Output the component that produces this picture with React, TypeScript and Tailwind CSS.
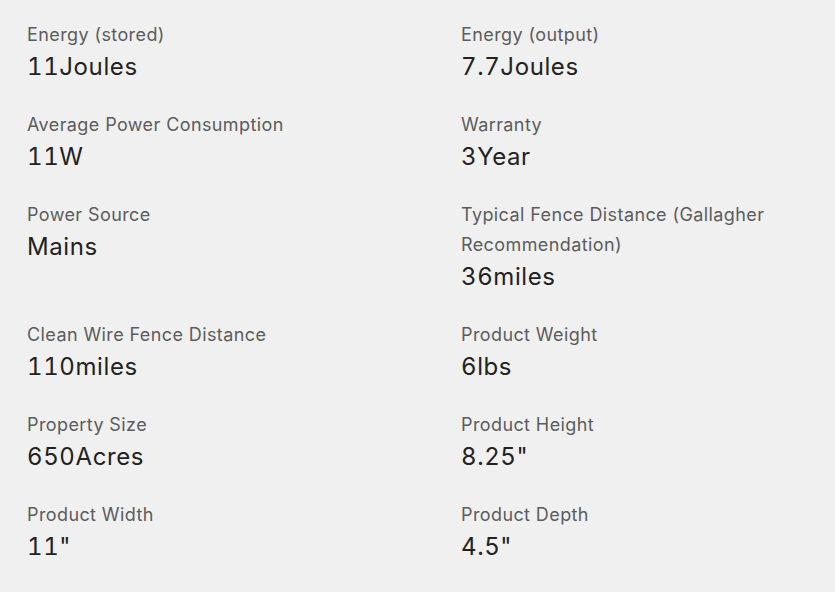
import React from 'react';

const specs = [
  { label: 'Energy (stored)', value: '11Joules' },
  { label: 'Energy (output)', value: '7.7Joules' },
  { label: 'Average Power Consumption', value: '11W' },
  { label: 'Warranty', value: '3Year' },
  { label: 'Power Source', value: 'Mains' },
  { label: 'Typical Fence Distance (Gallagher Recommendation)', value: '36miles' },
  { label: 'Clean Wire Fence Distance', value: '110miles' },
  { label: 'Product Weight', value: '6lbs' },
  { label: 'Property Size', value: '650Acres' },
  { label: 'Product Height', value: '8.25"' },
  { label: 'Product Width', value: '11"' },
  { label: 'Product Depth', value: '4.5"' },
];

const App: React.FC = () => {
  return (
    <div className="min-h-[592px] w-full bg-[#f0f0f0] font-['Inter',sans-serif]">
      <div className="grid grid-cols-[434px_1fr] pl-[27px] pr-[40px] pt-[20px]">
        {specs.map(item => (
          <div key={item.label} className="flex flex-col pb-[26px]">
            <span className="text-[18px] leading-[30px] tracking-[0.4px] text-[#5b5c5e]">{item.label}</span>
            <span className="text-[24px] leading-[34px] tracking-[0.6px] tabular-nums text-[#222222]">{item.value}</span>
          </div>
        ))}
      </div>
    </div>
  );
};

export default App;
